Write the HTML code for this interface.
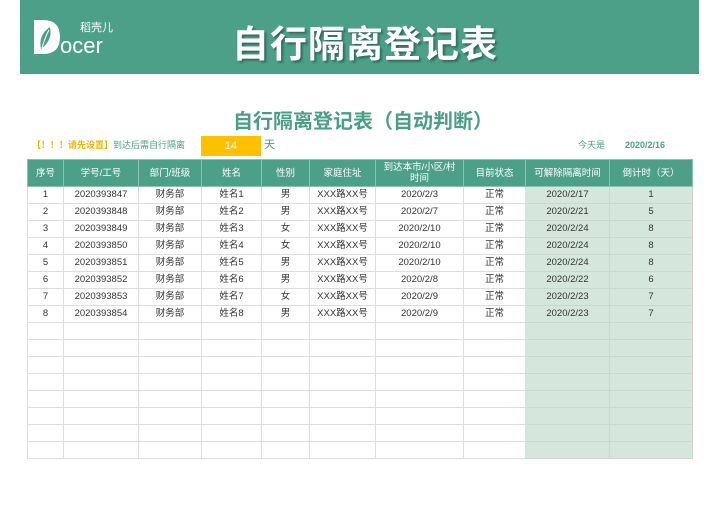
<!DOCTYPE html>
<html><head><meta charset="utf-8"><style>
body{margin:0;width:720px;height:509px;background:#fff;position:relative;overflow:hidden;font-family:"Liberation Sans","Noto Sans CJK SC",sans-serif;}
.band{position:absolute;left:20px;top:0;width:679px;height:74px;background:#4da088;}
.big{position:absolute;left:232px;top:14px;font-size:37px;font-weight:bold;color:#fff;letter-spacing:1px;text-shadow:2px 2px 2px rgba(0,0,0,.35);}
.logo{position:absolute;left:32px;top:16px;color:#fff;}
.t2{position:absolute;left:233px;top:105px;font-size:20px;font-weight:bold;color:#4a9e84;}
.note{position:absolute;top:139px;font-size:9px;line-height:12px;white-space:nowrap;}
table{position:absolute;left:27px;top:159px;border-collapse:collapse;font-size:9.5px;color:#333;table-layout:fixed;}
td,th{border:1px solid #ddd;text-align:center;padding:0;height:16px;line-height:14px;}
th{background:#4da088;color:#fff;font-weight:normal;height:26px;border:1px solid #8cc3b0;line-height:11px;}
td.g{background:#d5e6dc;border-color:#c8d8ce;}
</style></head><body>
<div class="band"></div>
<div class="logo">
<svg width="84" height="42" viewBox="0 0 84 42"><path d="M2 4 H11 Q28 4 28 21 Q28 38 11 38 H2 Z" fill="#fff"/><path d="M9 33 Q6 19 18 11 Q21 24 9 33 Z" fill="#4da088"/><path d="M10 32 Q13 21 17 14" stroke="#fff" stroke-width="1" fill="none"/>
<text x="28" y="37" font-size="22" fill="#fff" font-family="Liberation Sans">ocer</text>
<text x="48" y="15" font-size="11" fill="#fff" font-family="Noto Sans CJK SC">稻壳儿</text></svg></div>
<div class="big">自行隔离登记表</div>
<div class="t2">自行隔离登记表（自动判断）</div>
<div class="note" style="left:32px;color:#f0b400;font-weight:bold">【！！！请先设置】<span style="color:#4a9e84;font-weight:normal">到达后需自行隔离</span></div>
<div style="position:absolute;left:201px;top:136px;width:60px;height:20px;background:#ffc000;color:#fff;font-size:11px;text-align:center;line-height:20px">14</div>
<div class="note" style="left:264px;color:#4a9e84;font-size:11px">天</div>
<div class="note" style="left:578px;color:#4a9e84">今天是</div>
<div class="note" style="left:625px;color:#4a9e84;font-weight:bold">2020/2/16</div>
<table>
<colgroup><col style="width:36px"><col style="width:75px"><col style="width:63px"><col style="width:60px"><col style="width:48px"><col style="width:66px"><col style="width:88px"><col style="width:62px"><col style="width:84px"><col style="width:83px"></colgroup>
<tr><th>序号</th><th>学号/工号</th><th>部门/班级</th><th>姓名</th><th>性别</th><th>家庭住址</th><th>到达本市/小区/村<br>时间</th><th>目前状态</th><th>可解除隔离时间</th><th>倒计时（天）</th></tr>
<tr><td>1</td><td>2020393847</td><td>财务部</td><td>姓名1</td><td>男</td><td>XXX路XX号</td><td>2020/2/3</td><td>正常</td><td class="g">2020/2/17</td><td class="g">1</td></tr>
<tr><td>2</td><td>2020393848</td><td>财务部</td><td>姓名2</td><td>男</td><td>XXX路XX号</td><td>2020/2/7</td><td>正常</td><td class="g">2020/2/21</td><td class="g">5</td></tr>
<tr><td>3</td><td>2020393849</td><td>财务部</td><td>姓名3</td><td>女</td><td>XXX路XX号</td><td>2020/2/10</td><td>正常</td><td class="g">2020/2/24</td><td class="g">8</td></tr>
<tr><td>4</td><td>2020393850</td><td>财务部</td><td>姓名4</td><td>女</td><td>XXX路XX号</td><td>2020/2/10</td><td>正常</td><td class="g">2020/2/24</td><td class="g">8</td></tr>
<tr><td>5</td><td>2020393851</td><td>财务部</td><td>姓名5</td><td>男</td><td>XXX路XX号</td><td>2020/2/10</td><td>正常</td><td class="g">2020/2/24</td><td class="g">8</td></tr>
<tr><td>6</td><td>2020393852</td><td>财务部</td><td>姓名6</td><td>男</td><td>XXX路XX号</td><td>2020/2/8</td><td>正常</td><td class="g">2020/2/22</td><td class="g">6</td></tr>
<tr><td>7</td><td>2020393853</td><td>财务部</td><td>姓名7</td><td>女</td><td>XXX路XX号</td><td>2020/2/9</td><td>正常</td><td class="g">2020/2/23</td><td class="g">7</td></tr>
<tr><td>8</td><td>2020393854</td><td>财务部</td><td>姓名8</td><td>男</td><td>XXX路XX号</td><td>2020/2/9</td><td>正常</td><td class="g">2020/2/23</td><td class="g">7</td></tr>
<tr><td></td><td></td><td></td><td></td><td></td><td></td><td></td><td></td><td class="g"></td><td class="g"></td></tr>
<tr><td></td><td></td><td></td><td></td><td></td><td></td><td></td><td></td><td class="g"></td><td class="g"></td></tr>
<tr><td></td><td></td><td></td><td></td><td></td><td></td><td></td><td></td><td class="g"></td><td class="g"></td></tr>
<tr><td></td><td></td><td></td><td></td><td></td><td></td><td></td><td></td><td class="g"></td><td class="g"></td></tr>
<tr><td></td><td></td><td></td><td></td><td></td><td></td><td></td><td></td><td class="g"></td><td class="g"></td></tr>
<tr><td></td><td></td><td></td><td></td><td></td><td></td><td></td><td></td><td class="g"></td><td class="g"></td></tr>
<tr><td></td><td></td><td></td><td></td><td></td><td></td><td></td><td></td><td class="g"></td><td class="g"></td></tr>
<tr><td></td><td></td><td></td><td></td><td></td><td></td><td></td><td></td><td class="g"></td><td class="g"></td></tr>
</table>
</body></html>
